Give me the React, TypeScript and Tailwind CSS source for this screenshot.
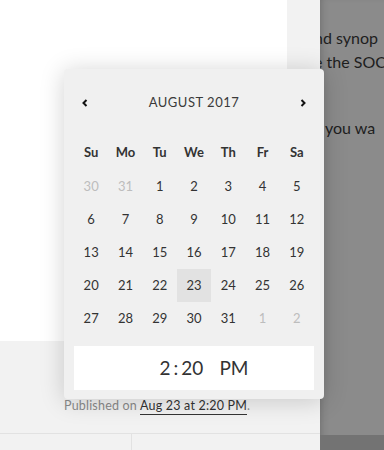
const days = [
  [30, 31, 1, 2, 3, 4, 5],
  [6, 7, 8, 9, 10, 11, 12],
  [13, 14, 15, 16, 17, 18, 19],
  [20, 21, 22, 23, 24, 25, 26],
  [27, 28, 29, 30, 31, 1, 2],
]

const weekdays = ['Su', 'Mo', 'Tu', 'We', 'Th', 'Fr', 'Sa']

function Chevron({ dir }: { dir: 'left' | 'right' }) {
  return (
    <svg width="10" height="10" viewBox="0 0 10 10" fill="none">
      <path
        d={dir === 'left' ? 'M6.5 2 L3.5 5 L6.5 8' : 'M3.5 2 L6.5 5 L3.5 8'}
        stroke="#111"
        strokeWidth="2"
      />
    </svg>
  )
}

function DatePicker() {
  return (
    <div className="absolute left-[64px] top-[69px] w-[260px] h-[330px] bg-[#f0f0f0] rounded-[4px] shadow-[0_2px_24px_rgba(0,0,0,0.18)] px-[10px]">
      {/* month header */}
      <div className="flex items-center justify-between h-[34px] mt-[17px] px-[6px]">
        <Chevron dir="left" />
        <span className="text-[13px] tracking-[0.5px] text-[#3a3a3a]">AUGUST 2017</span>
        <Chevron dir="right" />
      </div>

      {/* weekdays */}
      <div className="grid grid-cols-7 mt-[16px] h-[34px] items-center">
        {weekdays.map((d) => (
          <span key={d} className="text-center text-[13px] font-bold text-[#333]">
            {d}
          </span>
        ))}
      </div>

      {/* days */}
      <div className="flex flex-col">
        {days.map((row, r) => (
          <div key={r} className="grid grid-cols-7 h-[33px]">
            {row.map((d, c) => {
              const muted = (r === 0 && d > 7) || (r === 4 && d < 7)
              const selected = r === 3 && d === 23
              return (
                <span
                  key={c}
                  className={
                    'flex items-center justify-center text-[13px] ' +
                    (muted ? 'text-[#bdbdbd] ' : 'text-[#333] ') +
                    (selected ? 'bg-[#e2e2e2] text-[#111]' : '')
                  }
                >
                  {d}
                </span>
              )
            })}
          </div>
        ))}
      </div>

      {/* time */}
      <div className="mt-[11px] h-[44px] bg-white flex items-center justify-center pl-[20px] text-[19px] text-[#333]">
        <span>2</span>
        <span className="mx-[3px]">:</span>
        <span>20</span>
        <span className="ml-[16px]">PM</span>
      </div>
    </div>
  )
}

export default function App() {
  return (
    <div className="relative w-[384px] h-[450px] flex overflow-hidden font-['Lato',sans-serif]">
      {/* editor side */}
      <div className="w-[320px] flex flex-col bg-[#f2f2f2]">
        <div className="w-[287px] h-[341px] bg-white" />
        <div className="h-[92px] pl-[64px] pt-[59px] text-[12.5px] tracking-[0.2px] text-[#8a8a8a] leading-none">
          Published on{' '}
          <span className="text-[#333] border-b border-[#333] pb-[1px]">Aug 23 at 2:20 PM</span>.
        </div>
        <div className="flex-1 flex border-t border-[#e2e2e2]">
          <div className="w-[132px] border-r border-[#e2e2e2]" />
        </div>
      </div>

      {/* dimmed page */}
      <div className="flex-1 flex flex-col bg-[#8b8b8b] shadow-[inset_6px_0_8px_-6px_rgba(0,0,0,0.25)] overflow-hidden">
        <div className="flex-1 pt-[26px] text-[16px] leading-[24px] text-[#1e1e1e] whitespace-nowrap">
          <p className="-ml-[6px]">nd synop</p>
          <p className="-ml-[6px]">e the SOC</p>
          <p className="-ml-[4px] mt-[42px]">f you wa</p>
        </div>
        <div className="h-[15px] bg-[#737373]" />
      </div>

      <DatePicker />
    </div>
  )
}
